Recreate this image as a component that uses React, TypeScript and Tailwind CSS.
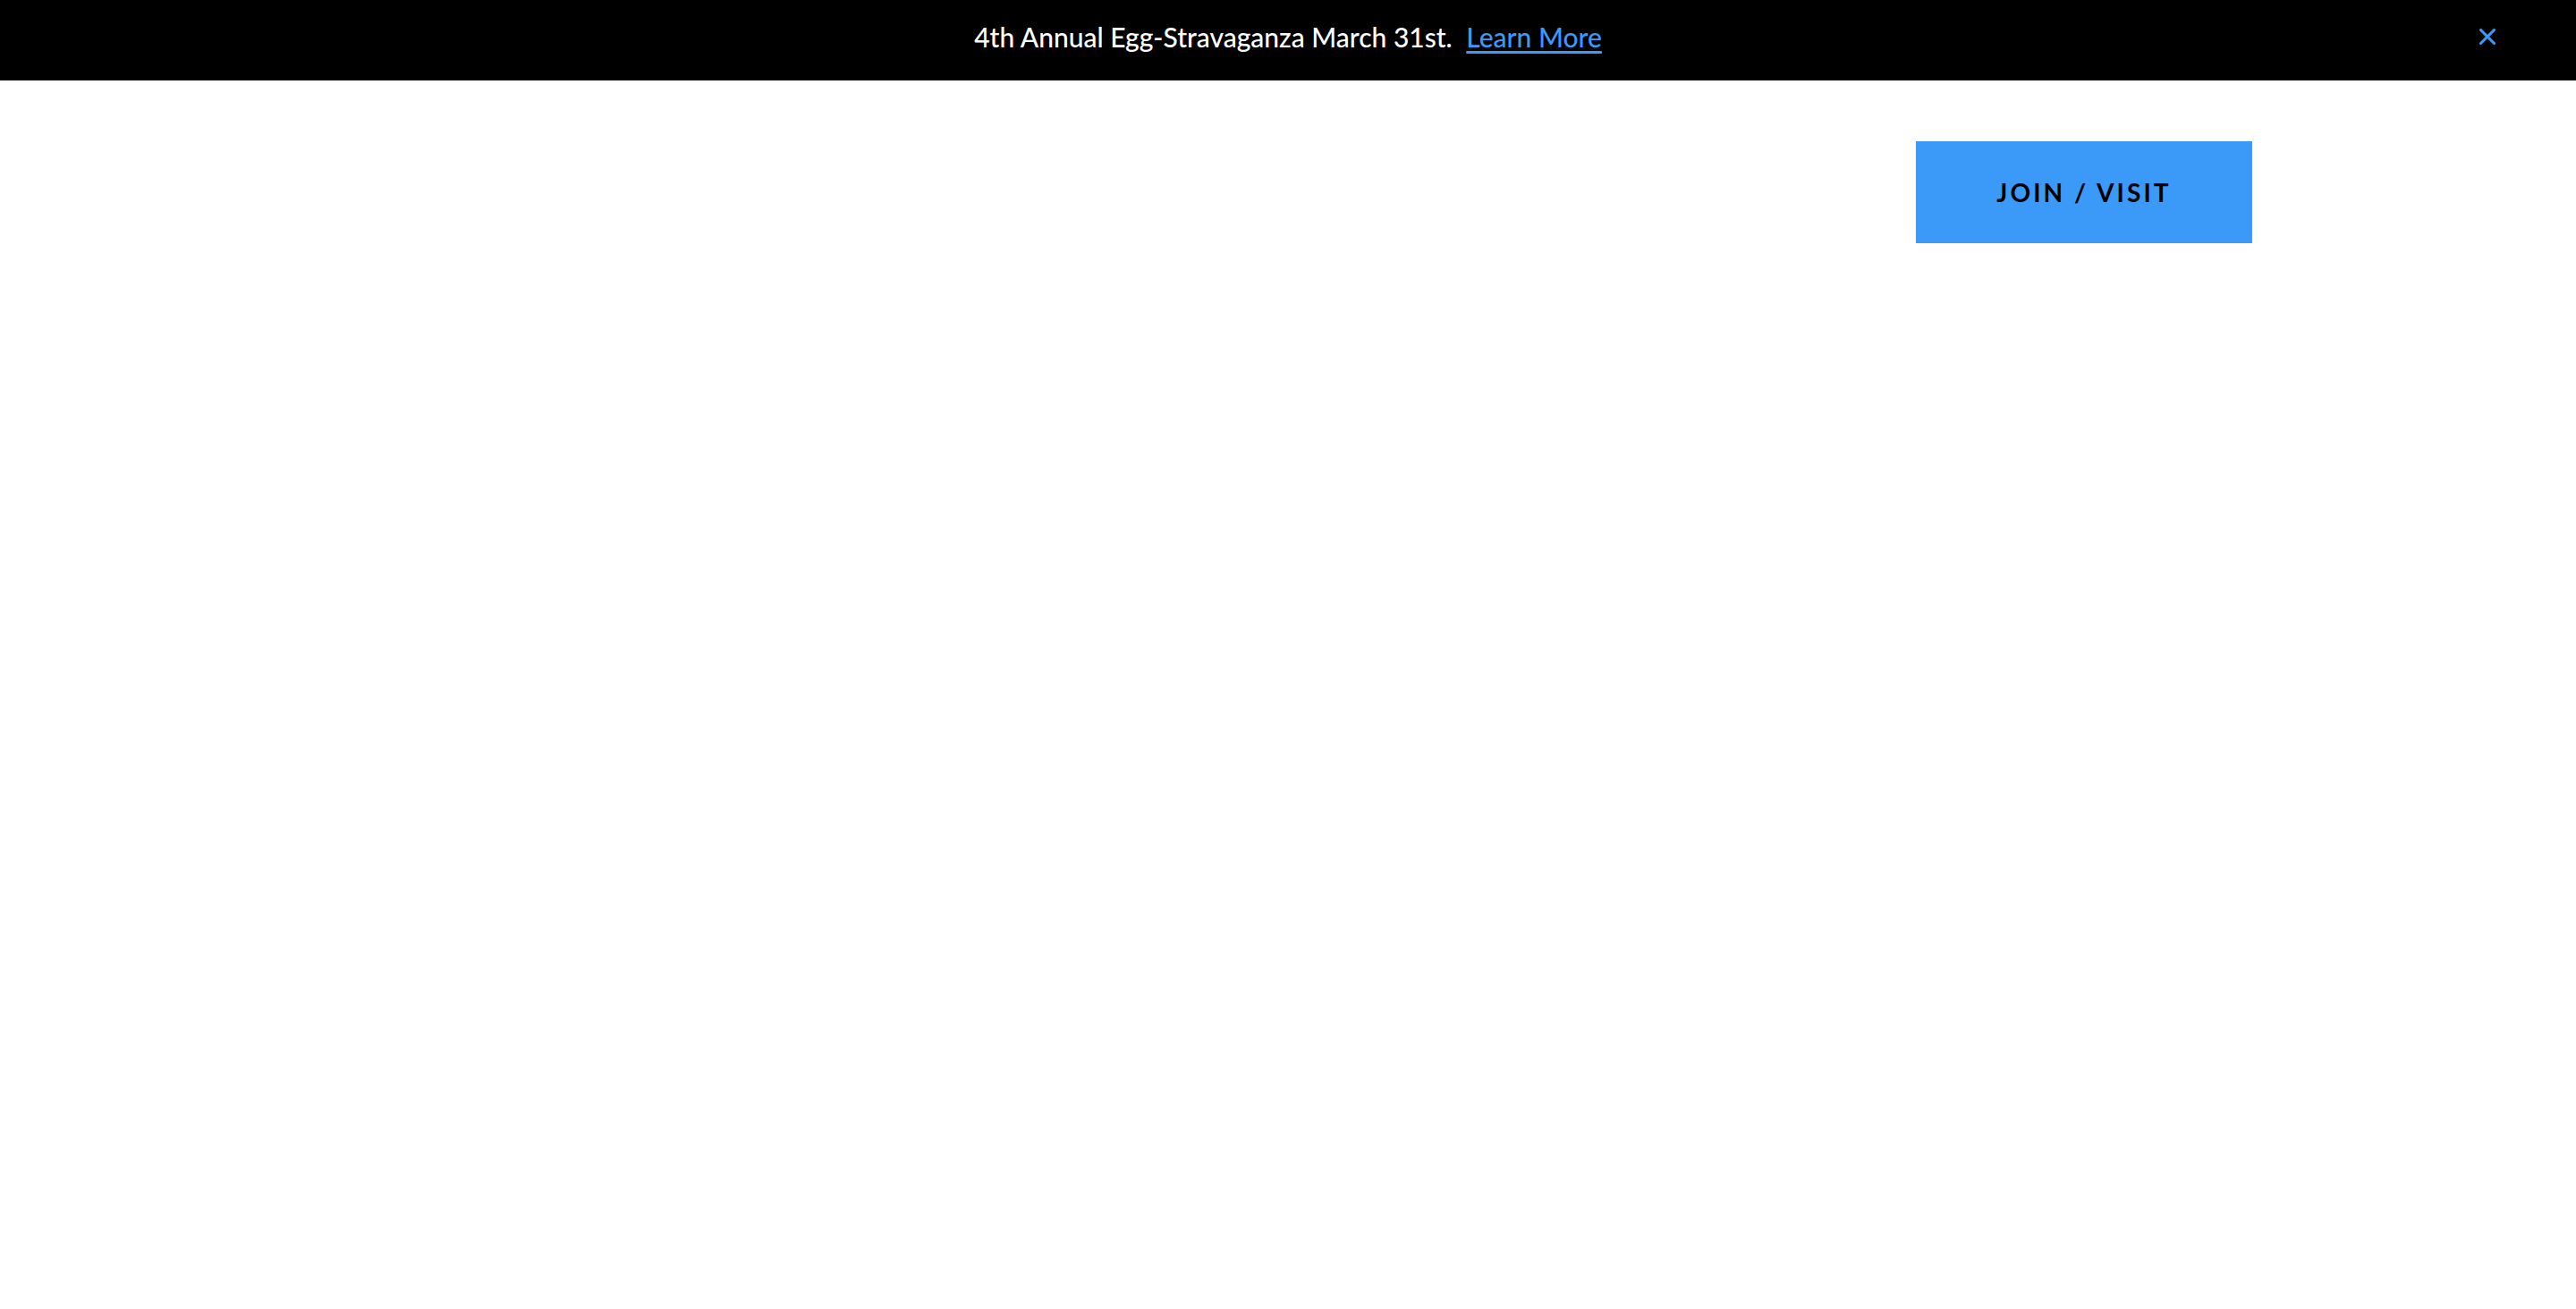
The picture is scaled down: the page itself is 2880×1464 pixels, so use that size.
import { X } from "lucide-react";

export default function App() {
  return (
    <div className="min-h-screen bg-white font-['Lato',sans-serif]">
      <div className="relative flex h-[90px] items-center justify-center bg-black pb-[8px]">
        <p className="text-[30px] font-medium text-white">
          4th Annual Egg-Stravaganza March 31st.{" "}
          <a href="#" className="ml-2 text-[#3b9af8] underline underline-offset-4">
            Learn More
          </a>
        </p>
        <button className="absolute right-[84px] top-[26px] text-[#3b9af8]">
          <X className="h-[30px] w-[30px]" strokeWidth={2.5} />
        </button>
      </div>
      <header className="flex justify-end pr-[362px] pt-[68px]">
        <a
          href="#"
          className="flex h-[114px] w-[376px] items-center justify-center bg-[#3b9af8] text-[28px] font-bold tracking-[0.11em] text-black"
        >
          JOIN / VISIT
        </a>
      </header>
    </div>
  );
}
